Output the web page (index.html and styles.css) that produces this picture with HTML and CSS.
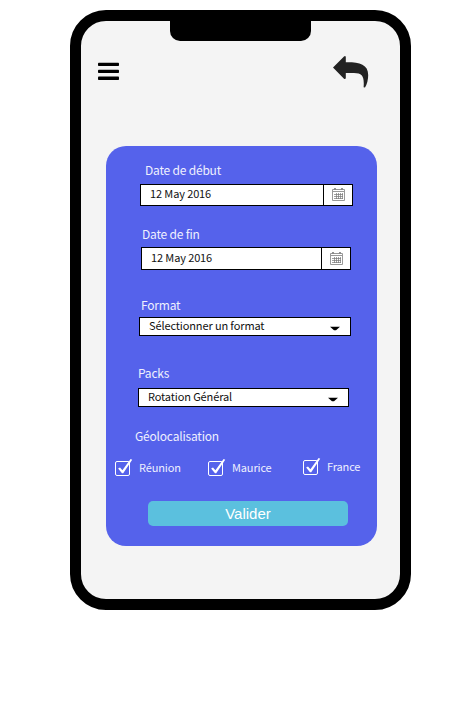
FILE: index.html
```html
<!DOCTYPE html>
<html lang="fr">
<head>
<meta charset="utf-8">
<title>Rotation</title>
<link rel="stylesheet" href="styles.css">
</head>
<body>
<svg width="0" height="0" class="defs">
  <symbol id="calendar" viewBox="0 0 13 13">
    <path d="M.5 1.5h12v11H.5zM.5 3.5h12" fill="none" stroke="#999"/>
    <path d="M3 0v2M10 0v2" stroke="#888" stroke-width="1.8"/>
    <path d="M2 6.5h9M2 8.5h9M2 10.5h9M4.5 5v6M6.5 5v6M8.5 5v6M10.5 5v6" fill="none" stroke="#777" stroke-width=".7"/>
  </symbol>
  <symbol id="check" viewBox="0 0 18 18">
    <rect x=".5" y="2.5" width="14" height="14" rx="1.5" fill="none" stroke="#fff"/>
    <path d="M3.1 9.6 5 8.5l2.4 2.7L15.6 0l1.6.7L8.2 14.2H7z" fill="#fff"/>
  </symbol>
</svg>
<main class="phone">
  <div class="notch"></div>
  <header class="topbar">
    <svg class="menu" width="21" height="19" viewBox="0 0 21 19"><g fill="#000"><rect y="0.7" width="21" height="3.4" rx=".8"/><rect y="7.7" width="21" height="3.4" rx=".8"/><rect y="14.6" width="21" height="3.4" rx=".8"/></g></svg>
    <svg class="back" width="36" height="32" viewBox="0 0 36 32"><path d="M0 11.5 11 .5Q12.6-.6 12.8 1.2V6.2C26 6 35.2 8 35.2 19Q35.2 26 32 31.6L30.6 31.3C31.4 20.5 29.6 17 21 17H12.8V21.8Q12.6 23.8 11 22.7Z" fill="#222"/></svg>
  </header>
  <form class="card">
    <label class="label start-label">Date de début</label>
    <div class="field date start"><span class="value">12 May 2016</span><span class="picker"><svg width="13" height="13"><use href="#calendar"/></svg></span></div>
    <label class="label end-label">Date de fin</label>
    <div class="field date end"><span class="value">12 May 2016</span><span class="picker"><svg width="13" height="13"><use href="#calendar"/></svg></span></div>
    <label class="label format-label">Format</label>
    <div class="field select format"><span class="value">Sélectionner un format</span><svg class="caret" width="10" height="5" viewBox="0 0 10 5"><path d="M0 .7h10L6 4.2H4z"/></svg></div>
    <label class="label packs-label">Packs</label>
    <div class="field select packs"><span class="value">Rotation Général</span><svg class="caret" width="10" height="5" viewBox="0 0 10 5"><path d="M0 .7h10L6 4.2H4z"/></svg></div>
    <div class="label geo-label">Géolocalisation</div>
    <div class="checks">
      <div class="check"><svg width="18" height="18"><use href="#check"/></svg><span>Réunion</span></div>
      <div class="check"><svg width="18" height="18"><use href="#check"/></svg><span>Maurice</span></div>
      <div class="check raised"><svg width="18" height="18"><use href="#check"/></svg><span>France</span></div>
    </div>
    <button class="submit" type="button">Valider</button>
  </form>
</main>
</body>
</html>
```
FILE: styles.css
```css
* { box-sizing: border-box; }

body {
  margin: 0;
  background: #fff;
  font-family: "Noto Sans CJK SC", "Noto Sans", sans-serif;
}

.defs { display: block; }

.phone {
  width: 341px;
  height: 600px;
  margin: 10px 0 0 70px;
  border: 11px solid #000;
  border-radius: 36px;
  background: #f4f4f4;
}

.notch {
  width: 141px;
  height: 20px;
  margin-left: 89px;
  background: #000;
  border-radius: 0 0 10px 10px;
}

.topbar {
  display: flex;
  justify-content: space-between;
  align-items: flex-start;
  height: 105px;
  padding: 15px 31px 0 17px;
}

.menu { margin-top: 6px; }

.card {
  display: flex;
  flex-direction: column;
  align-items: flex-start;
  width: 271px;
  height: 400px;
  margin-left: 25px;
  padding-top: 14px;
  border-radius: 20px;
  background: #5562eb;
}

.label {
  height: 20px;
  font-size: 12px;
  line-height: 20px;
  letter-spacing: -0.2px;
  color: #eff0fe;
  white-space: nowrap;
}

.start-label { margin-left: 39px; }
.end-label { margin: 18px 0 0 36px; }
.format-label { margin: 25px 0 0 35px; }
.packs-label { margin: 27px 0 0 32px; }
.geo-label { margin: 19px 0 0 29px; }

.field {
  display: flex;
  align-items: center;
  border: 1px solid #000;
  background: #fff;
  color: #111;
  font-size: 11px;
  line-height: 16px;
  letter-spacing: -0.12px;
}

.value {
  flex: 1;
  padding: 0 0 3px 9px;
  white-space: nowrap;
}

.picker {
  display: flex;
  align-items: center;
  justify-content: center;
  width: 29px;
  height: 100%;
  padding-bottom: 1px;
  border-left: 1px solid #000;
}

.start .value { padding-bottom: 4px; }
.select .value { padding-bottom: 4px; }

.start { width: 213px; height: 22px; margin: 4px 0 0 34px; }
.end { width: 210px; height: 23px; margin: 3px 0 0 35px; }
.format { width: 212px; height: 19px; margin: 2px 0 0 33px; }
.packs { width: 211px; height: 19px; margin: 5px 0 0 32px; }
.caret { margin: 4px 10px 0 0; }

.checks {
  display: grid;
  grid-template-columns: 93px 95px 70px;
  margin: 13px 0 0 9px;
}

.check {
  display: flex;
  align-items: flex-start;
  gap: 6px;
  height: 20px;
  font-size: 11px;
  line-height: 16px;
  letter-spacing: -0.14px;
  color: #eff0fe;
}

.raised { margin-top: -1px; }

.submit {
  width: 200px;
  height: 25px;
  margin: 22px 0 0 42px;
  padding: 0;
  border: 0;
  border-radius: 5px;
  background: #5bc0de;
  color: #fff;
  font: 15px/25px "Liberation Sans", sans-serif;
}
```
